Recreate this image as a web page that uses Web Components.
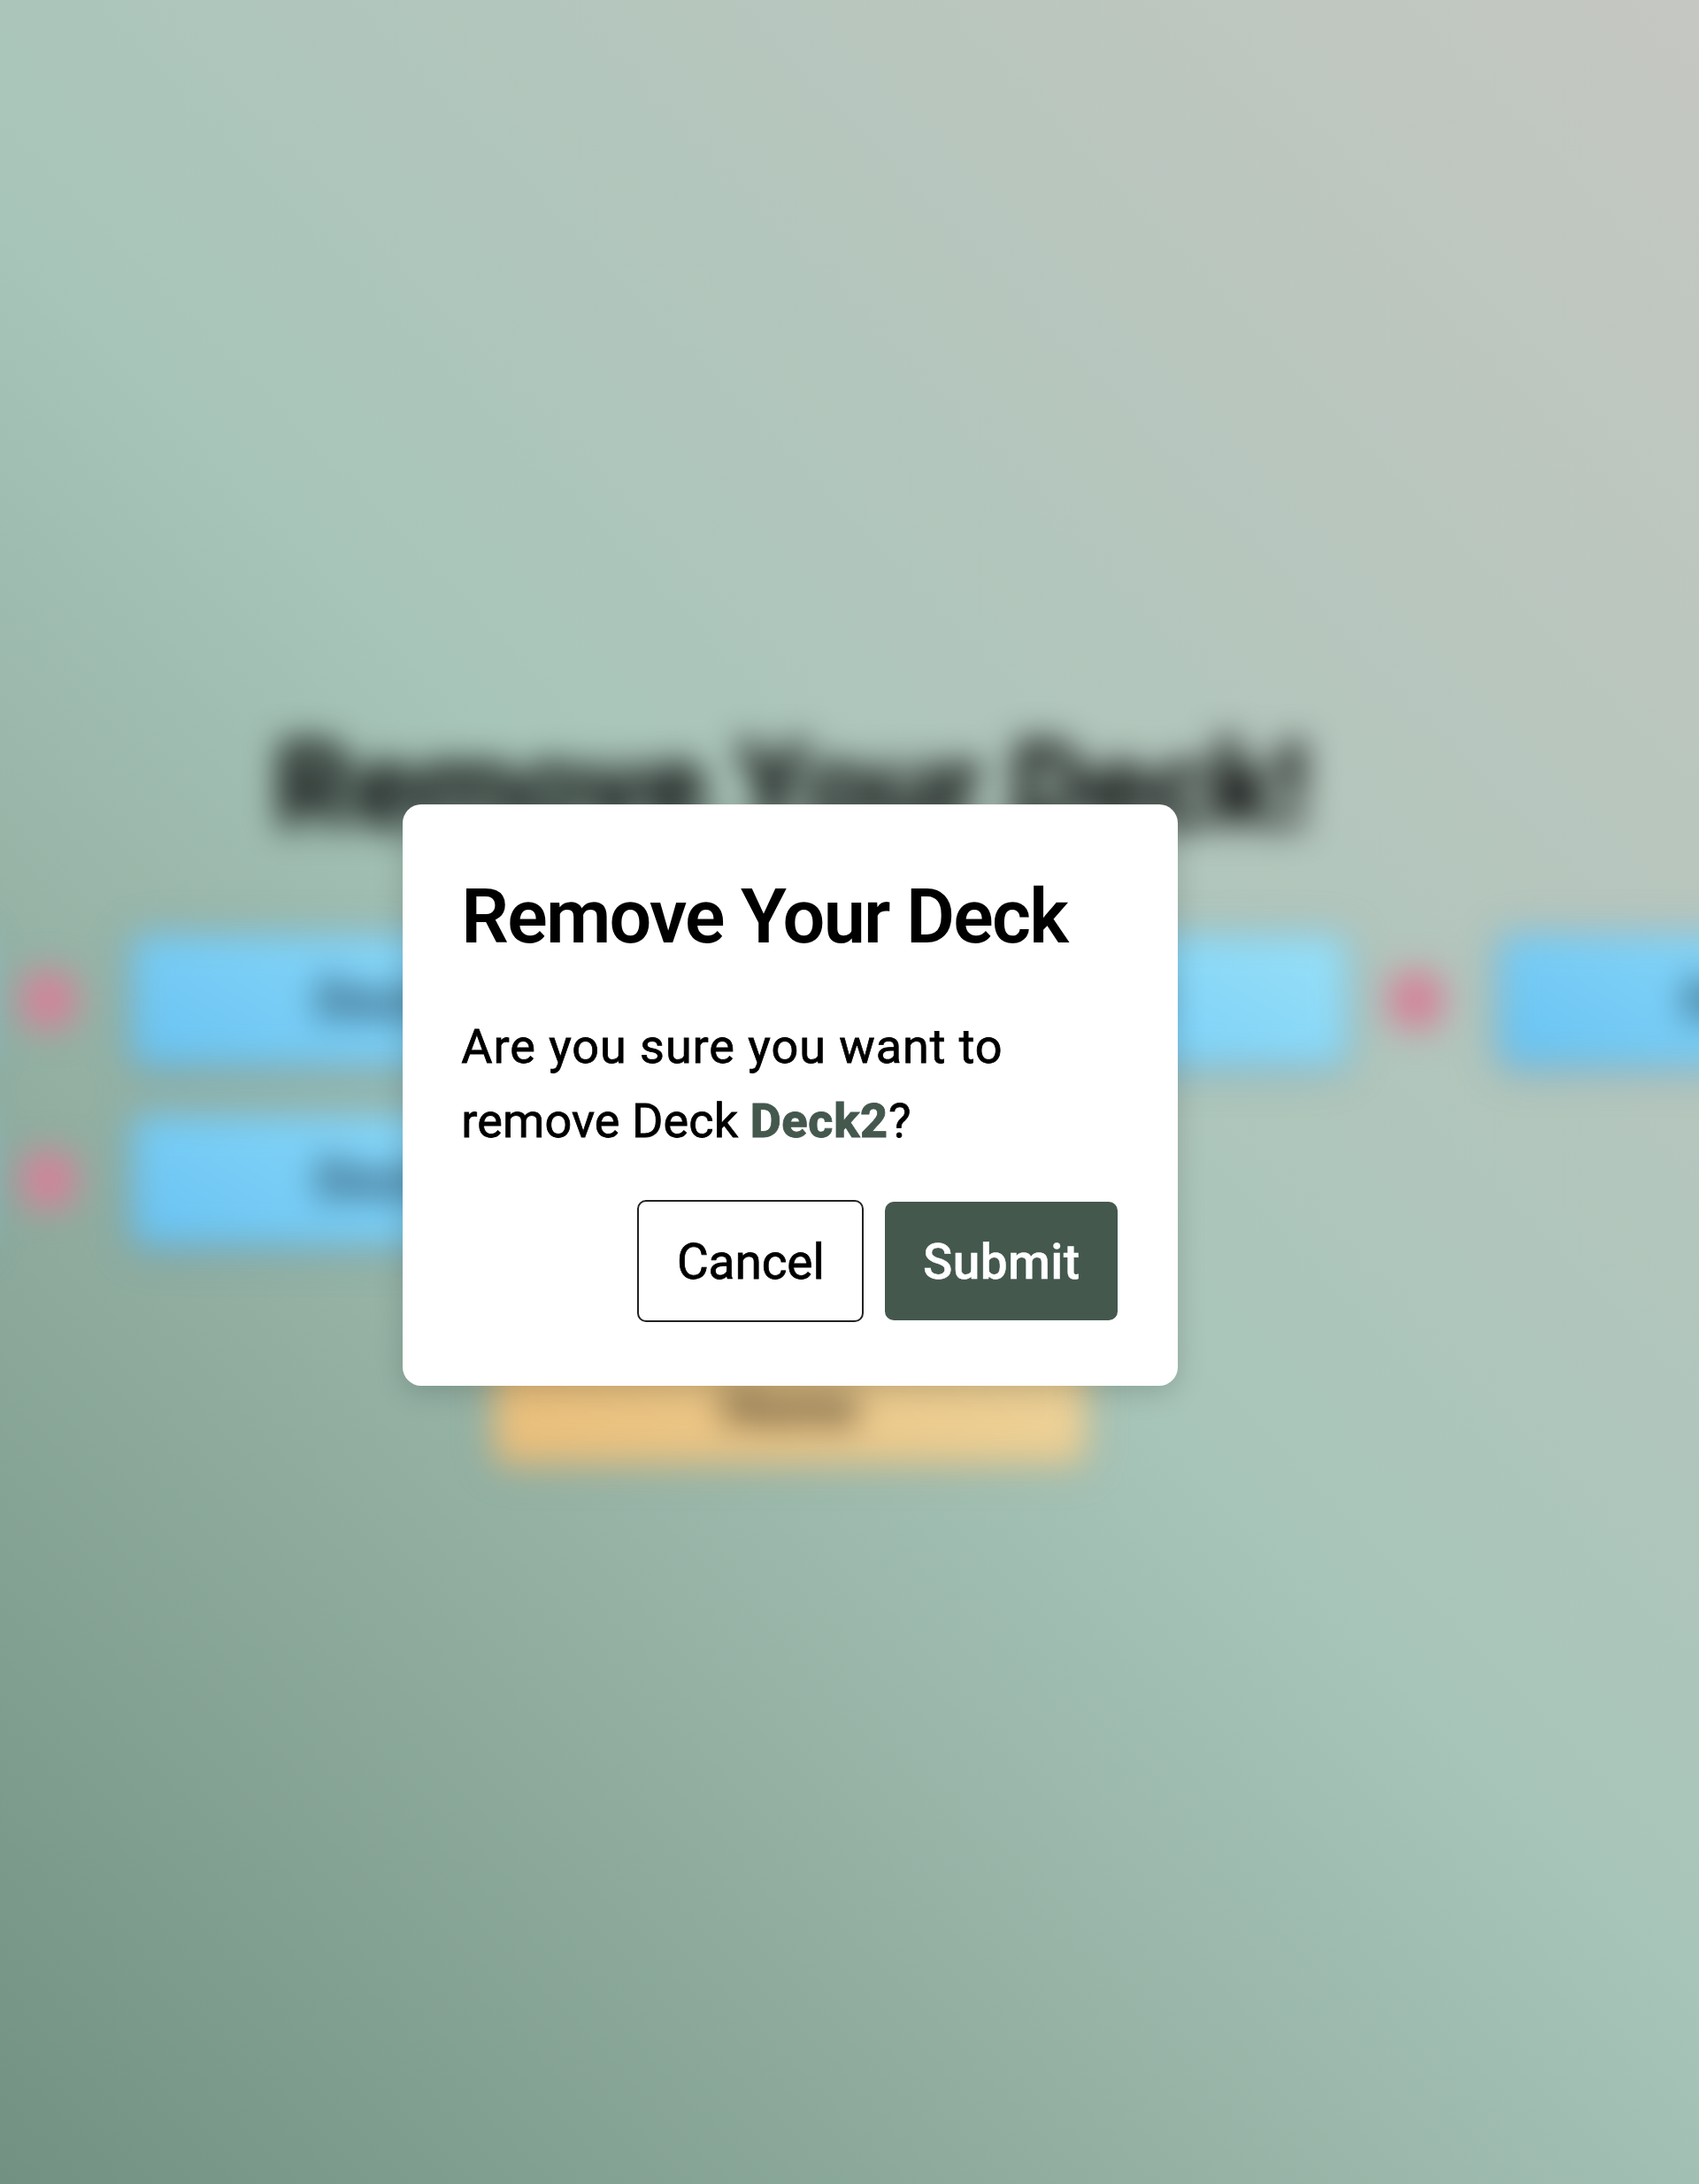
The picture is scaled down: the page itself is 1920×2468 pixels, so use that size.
<!DOCTYPE html>
<html lang="en">
<head>
<meta charset="utf-8">
<title>Remove Your Deck</title>
<style>
html, body { margin: 0; height: 100%; overflow: hidden; }
body { font-family: Roboto, "Noto Sans", sans-serif; color: #000; }
</style>
</head>
<body>
<deck-app></deck-app>
<script>
const define = (name, html) => customElements.define(name, class extends HTMLElement {
  constructor() {
    super();
    this.attachShadow({ mode: 'open' }).innerHTML = html;
  }
});

define('deck-item', `
<style>
:host { display: flex; align-items: center; gap: 64px; width: 725px; flex: none; }
.mark { width: 62px; height: 66px; border-radius: 22px; background: #d4829a; flex: none; }
.name { flex: 1; height: 146px; border-radius: 14px; display: flex; align-items: center; justify-content: center;
  background: linear-gradient(30deg, #68c2f1, #7fd2f8 50%, #98e0f7); font-size: 61px; font-weight: 900; color: #2c5068; letter-spacing: 2px;
  box-shadow: 0 4px 24px rgba(60,130,170,.6); }
</style>
<div class="mark"></div><div class="name"><span><slot></slot></span></div>`);

define('deck-row', `
<style>
:host { display: flex; gap: 47.5px; margin-left: -748.5px; }
</style><slot></slot>`);

define('deck-page', `
<style>
:host { display: block; height: 2468px; filter: blur(19px); }
h1 { margin: 0; padding-top: 812px; width: 1789px; text-align: center; font-size: 135px; line-height: 154px; font-weight: 800; letter-spacing: -1px; white-space: nowrap; }
.rows { display: grid; gap: 57px; padding-top: 91px; }
.back { width: 668px; height: 136px; margin: 112px 0 0 559px; border-radius: 14px; display: flex; align-items: center; justify-content: center;
  background: linear-gradient(45deg, #e9bd79, #edd39a); font-size: 57px; font-weight: 900; color: #4c402c;
  box-shadow: 0 4px 20px rgba(150,130,80,.4); }
.back span { padding-top: 8px; }
</style>
<h1>Remove Your Deck!</h1>
<div class="rows">
<deck-row><deck-item></deck-item><deck-item>Deck1</deck-item><deck-item>Deck2</deck-item><deck-item>Deck3</deck-item></deck-row>
<deck-row><deck-item></deck-item><deck-item>Deck4</deck-item></deck-row>
</div>
<div class="back"><span>Home</span></div>`);

define('dialog-button', `
<style>
:host { display: flex; align-items: center; justify-content: center; box-sizing: border-box; padding-top: 1px; font-size: 55px; line-height: 64px; border-radius: 10px; }
:host([kind=cancel]) { width: 256px; height: 138px; border: 2px solid #222; font-weight: 400; letter-spacing: -.1px; -webkit-text-stroke: .8px; }
:host([kind=submit]) { width: 263px; height: 133.5px; background: #44584e; color: #fff; font-weight: 500; letter-spacing: .4px; -webkit-text-stroke: .4px; }
</style><span><slot></slot></span>`);

define('confirm-dialog', `
<style>
:host { display: block; box-sizing: border-box; width: 875.5px; height: 657.5px; padding: 78px 67.5px 0 66px; background: #fff; border-radius: 21px;
  box-shadow: 0 8px 32px rgba(0,0,0,.17); }
h2 { margin: 0; font-size: 84.5px; line-height: 100px; font-weight: 600; letter-spacing: -1.75px; white-space: nowrap; }
p { margin: 54px 0 0; font-size: 54px; line-height: 84.5px; white-space: nowrap; -webkit-text-stroke: .8px; }
.ask { letter-spacing: .95px; }
.what { letter-spacing: .1px; }
b { font-weight: 800; color: #44584e; letter-spacing: .7px; }
.actions { display: flex; justify-content: flex-end; align-items: center; gap: 24px; margin-top: 46.5px; }
</style>
<h2>Remove Your Deck</h2>
<p><span class="ask">Are you sure you want to</span><br><span class="what">remove Deck <b>Deck2</b>?</span></p>
<div class="actions"><dialog-button kind="cancel">Cancel</dialog-button><dialog-button kind="submit">Submit</dialog-button></div>`);

define('deck-app', `
<style>
:host { display: block; position: relative; height: 2468px; overflow: hidden; background: linear-gradient(46deg, #739182, #a8c5b9 50%, #c5c7c2); }
confirm-dialog { position: absolute; left: 455.3px; top: 908.5px; }
</style>
<deck-page></deck-page>
<confirm-dialog></confirm-dialog>`);
</script>
</body>
</html>
